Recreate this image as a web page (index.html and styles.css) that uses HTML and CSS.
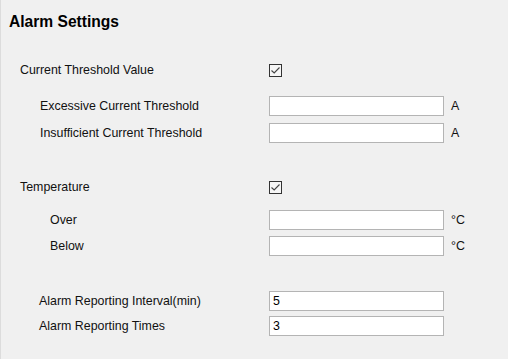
FILE: index.html
```html
<!DOCTYPE html>
<html lang="en">
<head>
    <meta charset="UTF-8">
    <title>Alarm Settings</title>
    <link rel="stylesheet" href="styles.css">
</head>
<body>
    <div class="panel">
        <h1 class="title">Alarm Settings</h1>

        <!-- Current threshold -->
        <div class="section current">
            <div class="row head">
                <span class="label">Current Threshold Value</span>
                <span class="check"><svg width="11" height="11" viewBox="0 0 11 11"><path d="M1.5 5.5 L4.2 8 L9.5 2.5" fill="none" stroke="#444" stroke-width="1.1"/></svg></span>
            </div>
            <div class="sub">
                <div class="row">
                    <span class="label indent">Excessive Current Threshold</span>
                    <input class="field" type="text">
                    <span class="unit">A</span>
                </div>
                <div class="row">
                    <span class="label indent">Insufficient Current Threshold</span>
                    <input class="field" type="text">
                    <span class="unit">A</span>
                </div>
            </div>
        </div>

        <!-- Temperature -->
        <div class="section temp">
            <div class="row head">
                <span class="label">Temperature</span>
                <span class="check"><svg width="11" height="11" viewBox="0 0 11 11"><path d="M1.5 5.5 L4.2 8 L9.5 2.5" fill="none" stroke="#444" stroke-width="1.1"/></svg></span>
            </div>
            <div class="sub tight">
                <div class="row">
                    <span class="label indent-wide">Over</span>
                    <input class="field" type="text">
                    <span class="unit">°C</span>
                </div>
                <div class="row">
                    <span class="label indent-wide">Below</span>
                    <input class="field" type="text">
                    <span class="unit">°C</span>
                </div>
            </div>
        </div>

        <!-- Reporting -->
        <div class="section report">
            <div class="row">
                <span class="label indent-report">Alarm Reporting Interval(min)</span>
                <input class="field" type="text" value="5">
            </div>
            <div class="row">
                <span class="label indent-report">Alarm Reporting Times</span>
                <input class="field" type="text" value="3">
            </div>
        </div>
    </div>
</body>
</html>
```

FILE: styles.css
```css
* {
    margin: 0;
    padding: 0;
    box-sizing: border-box;
}

body {
    background: #f0f0f0;
    font-family: "Liberation Sans", Arial, sans-serif;
    font-size: 12.4px;
    color: #111;
    height: 100vh;
    overflow: hidden;
}

.panel {
    height: 100%;
    border-left: 1px solid #dcdcdc;
    padding-top: 12px;
}

.title {
    font-size: 15.6px;
    font-weight: bold;
    line-height: 20px;
    padding-left: 8px;
    color: #000;
}

.section {
    display: flex;
    flex-direction: column;
}

.current {
    margin-top: 28px;
}

.temp {
    margin-top: 34px;
}

.report {
    margin-top: 35px;
    gap: 5px;
}

.sub {
    display: flex;
    flex-direction: column;
    gap: 7px;
    margin-top: 16px;
}

.sub.tight {
    gap: 6px;
    margin-top: 13px;
}

.row {
    display: flex;
    align-items: center;
    height: 20px;
}

.label {
    width: 268px;
    padding-left: 19px;
    flex-shrink: 0;
}

.label.indent {
    padding-left: 39px;
}

.label.indent-report {
    padding-left: 38px;
}

.label.indent-wide {
    padding-left: 49px;
}

.check {
    width: 13px;
    height: 13px;
    border: 1px solid #333;
    background: #f6f6f6;
    display: flex;
    align-items: center;
    justify-content: center;
}

.field {
    width: 175px;
    height: 20px;
    border: 1px solid #b4b4b4;
    background: #fff;
    font-family: "Liberation Sans", Arial, sans-serif;
    font-size: 12.4px;
    padding-left: 3px;
    color: #000;
    outline: none;
}

.unit {
    margin-left: 7px;
}
```
